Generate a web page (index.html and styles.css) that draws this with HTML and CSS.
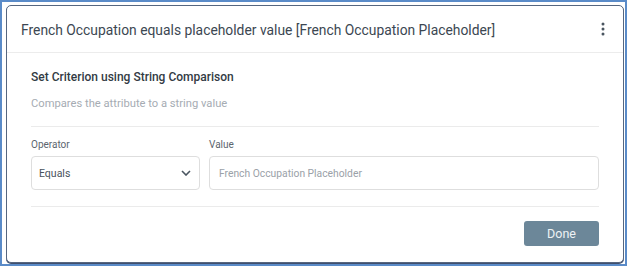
FILE: index.html
```html
<!DOCTYPE html>
<html lang="en">
<head>
    <meta charset="UTF-8">
    <meta name="viewport" content="width=device-width, initial-scale=1.0">
    <title>Criterion</title>
    <link rel="stylesheet" href="styles.css">
</head>
<body>

<div class="frame">
    <div class="card">
        <!-- Header -->
        <div class="card-header">
            <h1 class="card-title">French Occupation equals placeholder value [French Occupation Placeholder]</h1>
            <button class="menu-btn" aria-label="More">
                <svg width="4" height="14" viewBox="0 0 4 14">
                    <circle cx="2" cy="2" r="1.5" fill="#4a5560"/>
                    <circle cx="2" cy="7" r="1.5" fill="#4a5560"/>
                    <circle cx="2" cy="12" r="1.5" fill="#4a5560"/>
                </svg>
            </button>
        </div>

        <div class="card-body">
            <h2 class="section-title">Set Criterion using String Comparison</h2>
            <p class="section-desc">Compares the attribute to a string value</p>
            <hr class="divider">

            <div class="fields">
                <div class="field field-operator">
                    <label class="field-label">Operator</label>
                    <div class="select">
                        <span>Equals</span>
                        <svg width="10" height="6" viewBox="0 0 10 6">
                            <path d="M1 1l4 4 4-4" fill="none" stroke="#4a5560" stroke-width="1.6"/>
                        </svg>
                    </div>
                </div>
                <div class="field field-value">
                    <label class="field-label">Value</label>
                    <input type="text" class="text-input" placeholder="French Occupation Placeholder">
                </div>
            </div>

            <hr class="divider divider-bottom">

            <div class="actions">
                <button class="done-btn">Done</button>
            </div>
        </div>
    </div>
</div>

</body>
</html>
```

FILE: styles.css
```css
* {
    box-sizing: border-box;
    margin: 0;
    padding: 0;
}

body {
    font-family: 'Roboto', 'Liberation Sans', sans-serif;
    background-color: #fff;
    color: #3e4a56;
}

.frame {
    width: 627px;
    height: 266px;
    border: 2px solid #5a8bc8;
    padding: 3px 1px 1px 4px;
}

.card {
    height: 100%;
    background-color: #fff;
    border: 1px solid #56667f;
    border-radius: 5px;
    box-shadow: 0 1px 0 #3f4f6e;
}

.card-header {
    height: 47px;
    display: flex;
    align-items: center;
    justify-content: space-between;
    padding: 0 14px;
    border-bottom: 1px solid #ececec;
}

.card-title {
    font-size: 13.85px;
    font-weight: 400;
    color: #3c4752;
    padding-top: 1px;
}

.menu-btn {
    background: none;
    border: none;
    display: flex;
    padding: 0 3px;
    margin-right: 1px;
}

.card-body {
    padding: 16px 24px 0 24px;
}

.section-title {
    font-size: 12px;
    font-weight: 500;
    line-height: 16px;
    color: #333b44;
}

.section-desc {
    font-size: 11.2px;
    line-height: 16px;
    color: #a6acb3;
    margin-top: 11px;
}

.divider {
    border: none;
    border-top: 1px solid #ebebeb;
    margin-top: 14px;
}

.fields {
    display: flex;
    gap: 9px;
    margin-top: 11px;
}

.field {
    display: flex;
    flex-direction: column;
    gap: 4px;
}

.field-operator {
    width: 169px;
}

.field-value {
    flex: 1;
}

.field-label {
    font-size: 10px;
    line-height: 14px;
    color: #5c656e;
}

.select, .text-input {
    height: 34px;
    border: 1px solid #dedede;
    border-radius: 4px;
    background-color: #fff;
}

.select {
    display: flex;
    align-items: center;
    justify-content: space-between;
    padding: 0 8px 0 7px;
    font-size: 10.5px;
    color: #48525c;
}

.text-input {
    width: 100%;
    padding: 0 9px;
    font-family: inherit;
    font-size: 10.3px;
}

.text-input::placeholder {
    color: #9aa1a8;
}

.divider-bottom {
    margin-top: 16px;
}

.actions {
    display: flex;
    justify-content: flex-end;
    margin-top: 14px;
}

.done-btn {
    width: 75px;
    height: 25px;
    background-color: #6c8799;
    color: #eef2f5;
    border: none;
    border-radius: 3px;
    font-family: inherit;
    font-size: 12.5px;
    padding-bottom: 1px;
}
```
